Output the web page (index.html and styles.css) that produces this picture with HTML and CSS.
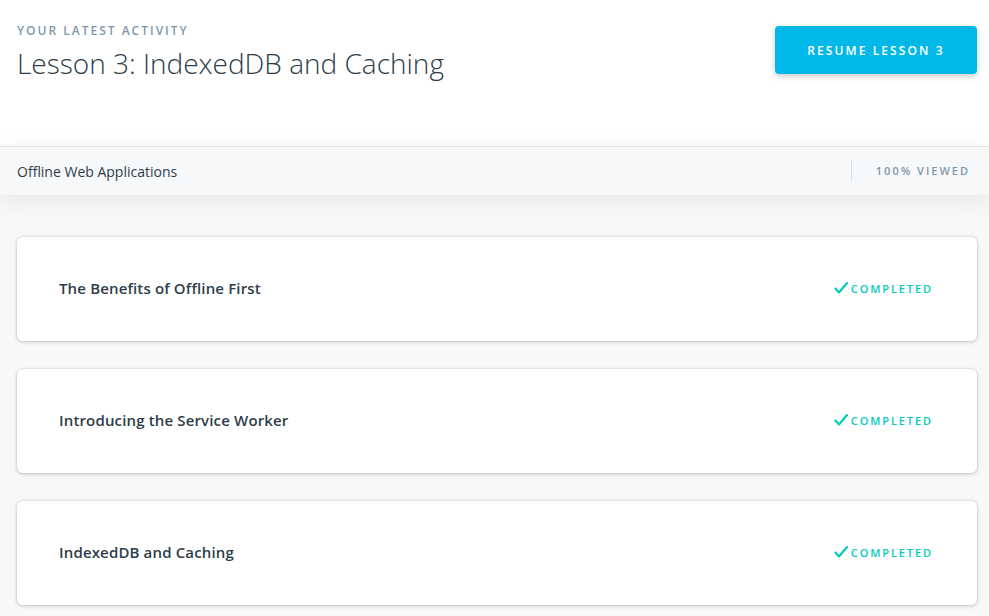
FILE: index.html
```html
<!DOCTYPE html>
<html>
<head>
<meta charset="utf-8">
<link rel="stylesheet" href="styles.css">
</head>
<body>
<header class="hero">
  <div class="hero-text">
    <div class="eyebrow">YOUR LATEST ACTIVITY</div>
    <h1 class="title">Lesson 3: IndexedDB and Caching</h1>
  </div>
  <button class="resume">RESUME LESSON 3</button>
</header>
<div class="course-bar">
  <span class="course-name">Offline Web Applications</span>
  <span class="viewed">100% VIEWED</span>
</div>
<main class="lessons">
  <div class="card">
    <span class="card-title">The Benefits of Offline First</span>
    <span class="status"><svg class="check" viewBox="0 0 14 12" width="14" height="12"><path d="M1.5 6.5 L5 10.5 L13 1" fill="none" stroke="#02ccba" stroke-width="2.2" stroke-linecap="round" stroke-linejoin="round"/></svg>COMPLETED</span>
  </div>
  <div class="card">
    <span class="card-title">Introducing the Service Worker</span>
    <span class="status"><svg class="check" viewBox="0 0 14 12" width="14" height="12"><path d="M1.5 6.5 L5 10.5 L13 1" fill="none" stroke="#02ccba" stroke-width="2.2" stroke-linecap="round" stroke-linejoin="round"/></svg>COMPLETED</span>
  </div>
  <div class="card">
    <span class="card-title">IndexedDB and Caching</span>
    <span class="status"><svg class="check" viewBox="0 0 14 12" width="14" height="12"><path d="M1.5 6.5 L5 10.5 L13 1" fill="none" stroke="#02ccba" stroke-width="2.2" stroke-linecap="round" stroke-linejoin="round"/></svg>COMPLETED</span>
  </div>
</main>
</body>
</html>
```
FILE: styles.css
```css
* { box-sizing: border-box; }
html, body {
  margin: 0;
  padding: 0;
  background: #f7f8fa;
  font-family: "Open Sans", "Noto Sans", sans-serif;
  color: #2e3d49;
}
.hero {
  background: #fff;
  height: 146px;
  display: flex;
  justify-content: space-between;
  align-items: flex-start;
  padding: 23px 12px 0 17px;
}
.eyebrow {
  font-size: 12px;
  letter-spacing: 2px;
  color: #7d97ad;
  font-weight: 600;
  line-height: 16px;
}
.title {
  margin: 6px 0 0;
  font-size: 28px;
  font-weight: 300;
  line-height: 36px;
  color: #2e3d49;
  letter-spacing: 0;
}
.resume {
  margin-top: 3px;
  width: 202px;
  height: 48px;
  border: 0;
  border-radius: 4px;
  background: #02b8e8;
  color: #fff;
  font-family: "Open Sans", sans-serif;
  font-size: 12px;
  font-weight: 600;
  letter-spacing: 2.1px;
  box-shadow: 0 2px 6px rgba(0,0,0,0.22);
  padding: 0;
}
.course-bar {
  position: relative;
  z-index: 1;
  height: 49px;
  background: #f7f8fa;
  border-top: 1px solid #dfe3e8;
  display: flex;
  align-items: center;
  justify-content: space-between;
  padding: 0 19px 0 17px;
  box-shadow: 0 6px 24px rgba(0,0,0,0.07);
}
.course-name {
  font-size: 14px;
  color: #2e3d49;
}
.viewed {
  font-size: 11px;
  font-weight: 600;
  letter-spacing: 2px;
  color: #7d97ad;
  border-left: 1px solid #dbe2e8;
  padding-left: 24px;
  line-height: 22px;
}
.lessons {
  padding: 42px 12px 11px 17px;
  display: flex;
  flex-direction: column;
  gap: 28px;
}
.card {
  height: 104px;
  background: #fff;
  border-radius: 6px;
  box-shadow: 0 0 0 1px rgba(0,0,0,0.04), 0 1px 4px rgba(0,0,0,0.2);
  display: flex;
  align-items: center;
  justify-content: space-between;
  padding: 2px 44px 0 42px;
}
.card-title {
  font-size: 15px;
  font-weight: 600;
  color: #2e3d49;
  margin-top: -4px;
  letter-spacing: 0.15px;
}
.status {
  display: flex;
  align-items: center;
  gap: 3px;
  font-size: 11px;
  font-weight: 600;
  letter-spacing: 1.9px;
  color: #02ccba;
  margin-top: -4px;
}
.check { display: block; margin-top: -1px; }
```
